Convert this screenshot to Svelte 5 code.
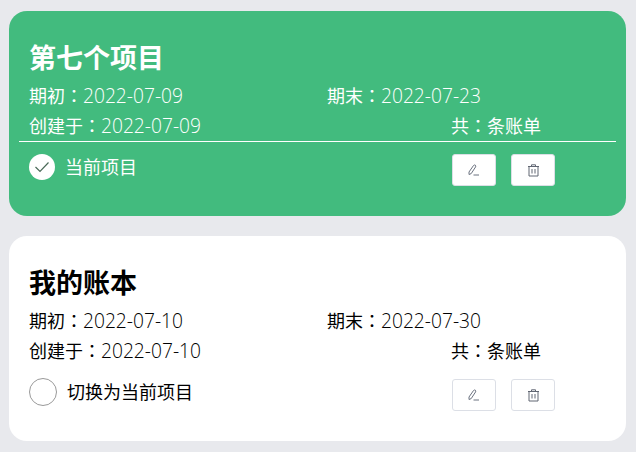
<script>
  const projects = [
    { name: '第七个项目', start: '2022-07-09', end: '2022-07-23', created: '2022-07-09', current: true },
    { name: '我的账本', start: '2022-07-10', end: '2022-07-30', created: '2022-07-10', current: false }
  ];
</script>

<div class="page">
  {#each projects as p}
    <section class="card" class:current={p.current}>
      <h2>{p.name}</h2>
      <div class="row">
        <span class="c1">期初<span class="colon">：</span><span class="num">{p.start}</span></span>
        <span>期末<span class="colon">：</span><span class="num">{p.end}</span></span>
      </div>
      <div class="row info">
        <span class="c2">创建于<span class="colon">：</span><span class="num">{p.created}</span></span>
        <span>共<span class="colon">：</span>条账单</span>
      </div>
      <div class="foot">
        <div class="state">
          {#if p.current}
            <span class="check">
              <svg width="16" height="12" viewBox="0 0 16 12" fill="none"><path d="M1.5 6 L6 10.5 L14.5 1.5" stroke="#4a6a58" stroke-width="1.2"/></svg>
            </span>
            <span class="label">当前项目</span>
          {:else}
            <span class="radio"></span>
            <span class="label">切换为当前项目</span>
          {/if}
        </div>
        <div class="actions">
          <button aria-label="编辑">
            <svg width="12" height="12" viewBox="0 0 12 12" fill="none" stroke="#6b7280" stroke-width="1"><path d="M1 10.5 L1 8 L5.5 1.5 Q6.3 0.6 7.3 1.2 Q8.2 1.9 7.6 2.9 L3.2 9.6 Z"/><path d="M5.5 11 H11"/></svg>
          </button>
          <button aria-label="删除">
            <svg width="11" height="13" viewBox="0 0 11 13" fill="none" stroke="#606672" stroke-width="1"><path d="M0 2.5 H11"/><path d="M3.5 2.5 V0.8 H7.5 V2.5"/><path d="M1 2.5 V12 H10 V2.5"/><path d="M4 5 V9.5 M7 5 V9.5"/></svg>
          </button>
        </div>
      </div>
    </section>
  {/each}
</div>

<style>
  :global(body) {
    margin: 0;
    background: #e8e9ed;
  }
  .page {
    padding: 11px 10px 11px 9px;
    display: flex;
    flex-direction: column;
    gap: 20px;
    font-family: "Open Sans", "Noto Sans CJK SC", sans-serif;
    font-size: 18px;
    color: #000;
  }
  .card {
    height: 205px;
    box-sizing: border-box;
    background: #fff;
    border-radius: 18px;
    padding: 29px 10px 0;
  }
  .card.current {
    background: #42bb7e;
    color: #fff;
  }
  h2 {
    margin: 0 0 5px 10px;
    font-size: 27px;
    line-height: 36px;
    font-weight: 700;
  }
  .row {
    display: flex;
    padding-left: 10px;
    height: 30px;
    line-height: 28px;
    white-space: nowrap;
  }
  .c1 { width: 298px; }
  .c2 { width: 422px; }
  .num {
    font-size: 19.2px;
    font-weight: 300;
  }
  .colon { font-family: "Noto Sans CJK TC", sans-serif; }
  .info {
    border-bottom: 1px solid transparent;
  }
  .current .info {
    border-bottom-color: #fff;
  }
  .foot {
    display: flex;
    justify-content: space-between;
    align-items: flex-start;
    padding: 12px 61px 0 10px;
  }
  .state {
    display: flex;
    align-items: center;
  }
  .check {
    width: 26px;
    height: 26px;
    border-radius: 50%;
    background: #fff;
    display: flex;
    align-items: center;
    justify-content: center;
  }
  .radio {
    width: 26px;
    height: 26px;
    margin-top: -1px;
    border-radius: 50%;
    border: 1px solid #999;
  }
  .label {
    margin-left: 10px;
    line-height: 24px;
    margin-bottom: 1px;
  }
  .actions {
    display: flex;
    gap: 15px;
  }
  button {
    width: 44px;
    height: 32px;
    padding: 0;
    background: #fff;
    border: 1px solid #dcdfe6;
    border-radius: 3px;
    display: flex;
    align-items: center;
    justify-content: center;
  }
</style>
